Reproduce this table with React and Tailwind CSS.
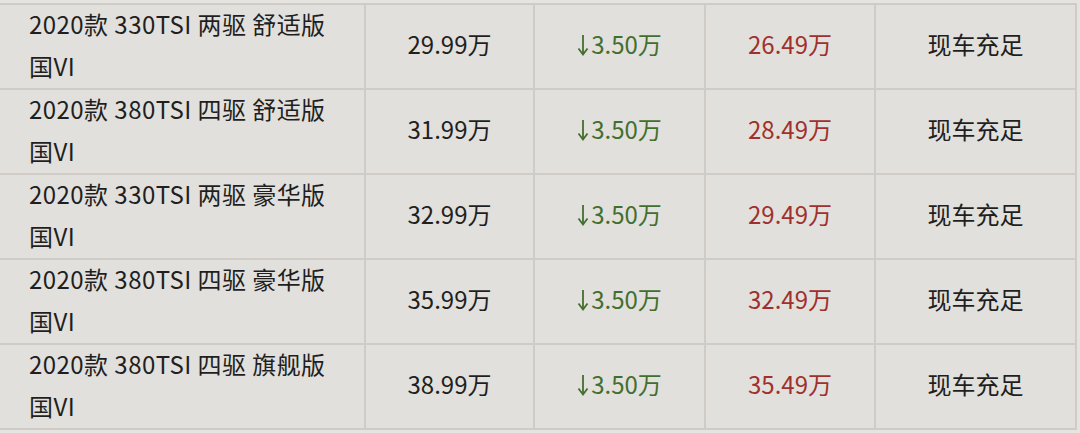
import React from "react";

const rows = [
  { a: "2020款 330TSI 两驱 舒适版", p: "29.99万", d: "3.50万", n: "26.49万" },
  { a: "2020款 380TSI 四驱 舒适版", p: "31.99万", d: "3.50万", n: "28.49万" },
  { a: "2020款 330TSI 两驱 豪华版", p: "32.99万", d: "3.50万", n: "29.49万" },
  { a: "2020款 380TSI 四驱 豪华版", p: "35.99万", d: "3.50万", n: "32.49万" },
  { a: "2020款 380TSI 四驱 旗舰版", p: "38.99万", d: "3.50万", n: "35.49万" },
];

function DownArrow() {
  return (
    <svg width="12" height="24" viewBox="0 0 12 24" className="mr-[2px] mt-[2px]" aria-hidden="true">
      <path d="M6 2 V21" stroke="currentColor" strokeWidth="1.8" fill="none" />
      <path d="M1.5 15.5 L6 21.5 L10.5 15.5" stroke="currentColor" strokeWidth="1.8" fill="none" strokeLinejoin="miter" />
    </svg>
  );
}

export default function App() {
  return (
    <div
      className="w-[1080px] h-[433px] bg-[#e6e4e0] pt-[3px] overflow-hidden text-[24px] text-[#1f1f1f]"
      style={{ fontFamily: '"Noto Sans CJK SC", "Noto Sans", sans-serif' }}
    >
      <div className="w-[1077px] border-t-2 border-r-2 border-[#d0cbc4] bg-[#e2e0dc]">
        {rows.map((r, i) => (
          <div
            key={i}
            className="grid grid-cols-[366px_169px_171px_170px_199px] grid-rows-[83px] h-[85px] border-b-2 border-[#d0cbc4]"
          >
            <div className="flex flex-col justify-center min-h-0 pl-[29px] pb-[3px] leading-[42px] tracking-[0.45px] border-r-2 border-[#d0cbc4]">
              <span className="whitespace-nowrap">{r.a}</span>
              <span>国VI</span>
            </div>
            <div className="flex items-center justify-center pb-[6px] border-r-2 border-[#d0cbc4]">
              {r.p}
            </div>
            <div className="flex items-center justify-center pb-[6px] border-r-2 border-[#d0cbc4] text-[#436f2e]">
              <DownArrow />
              {r.d}
            </div>
            <div className="flex items-center justify-center pb-[6px] border-r-2 border-[#d0cbc4] text-[#a0302d]">
              {r.n}
            </div>
            <div className="flex items-center justify-center pb-[6px]">现车充足</div>
          </div>
        ))}
      </div>
    </div>
  );
}
